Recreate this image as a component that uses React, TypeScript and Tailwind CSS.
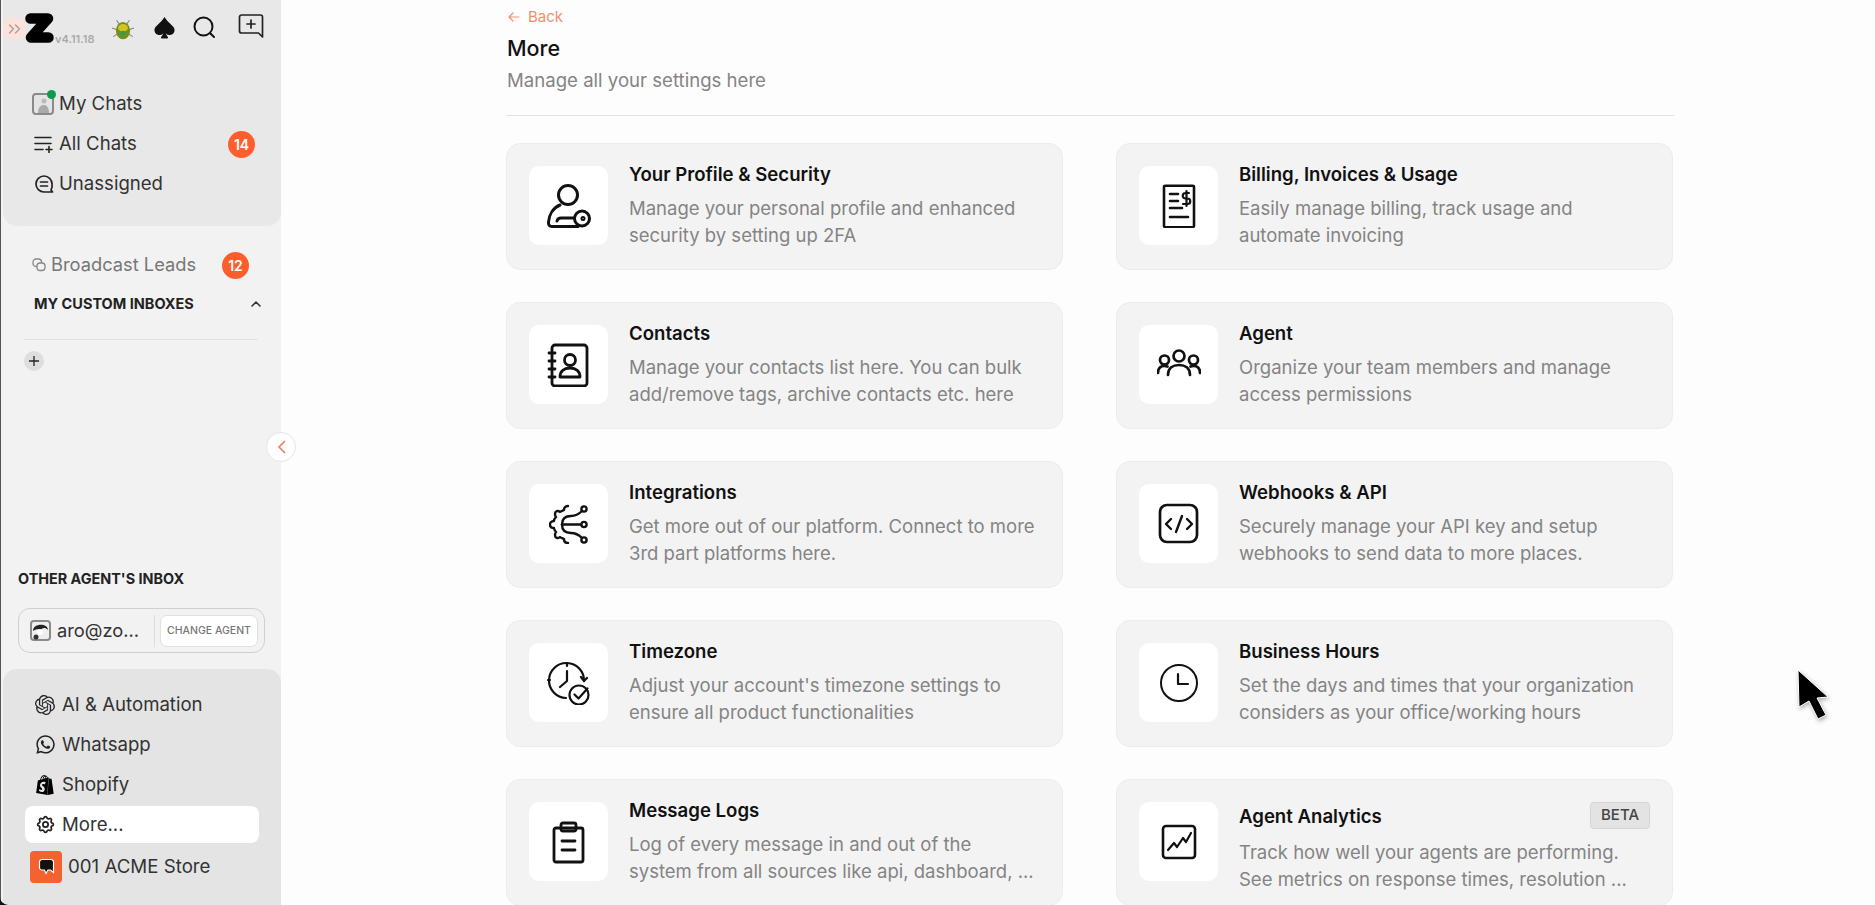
import type { ReactNode } from "react";
import { SiOpenai, SiShopify } from "react-icons/si";
import { FaWhatsapp } from "react-icons/fa";
import { BsSuitSpadeFill } from "react-icons/bs";
import { TbSettings } from "react-icons/tb";

function Stroke({ size, box, width = 2, children }: { size: number; box: number; width?: number; children: ReactNode }) {
  return (
    <svg width={size} height={size} viewBox={`0 0 ${box} ${box}`} fill="none" stroke="currentColor" strokeWidth={width} strokeLinecap="round" strokeLinejoin="round">
      {children}
    </svg>
  );
}

function ProfileKeyIcon() {
  return (
    <Stroke size={44} box={44} width={3}>
      <circle cx="21" cy="11" r="9.500" />
      <path d="M13 21C6 24 2 31 1.500 38C1.300 41 2.500 42.500 5 42.500H31" />
      <path d="M10 37C10.500 35 12 34 14 34H27" />
      <circle cx="35" cy="34.500" r="7.500" />
      <circle cx="36" cy="34.500" r="1" />
    </Stroke>
  );
}

function ContactsIcon() {
  return (
    <Stroke size={44} box={44} width={2.8}>
      <rect x="5" y="2" width="35" height="41" rx="3" />
      <circle cx="23" cy="17" r="5.500" />
      <path d="M13 34c0-6 4-9 10-9s10 3 10 9z" />
      <path d="M2 10h6M2 18h6M2 26h6M2 34h6" />
    </Stroke>
  );
}

function IntegrationsIcon() {
  return (
    <Stroke size={40} box={40} width={2.4}>
      <path d="M19 2C16 2 15 4 15 6C13 7 12 7 11 8C9 6 6 7 6 10C6 11 6 12 7 13C6 14 5 15 5 17C2 17 1 19 1 20.500C1 22 2 24 5 24C5 26 6 27 7 28C6 29 6 30 6 31C6 34 9 35 11 33C12 34 13 34 15 35C15 37 16 39 19 39" />
      <path d="M13 20.500C13 14 17 12 22 12C27 12 30 10 33 7" />
      <path d="M13 20.500C13 27 17 29 22 29C27 29 30 31 33 34" />
      <path d="M13 20.500H32" />
      <circle cx="35" cy="5" r="2.600" />
      <circle cx="35" cy="20.500" r="2.600" />
      <circle cx="35" cy="36" r="2.600" />
    </Stroke>
  );
}

function TimezoneIcon() {
  return (
    <Stroke size={44} box={44} width={2.2}>
      <path d="M37 20A17.500 17.500 0 1 0 19 37" />
      <path d="M20 2v3M3 19H1M34 16l3 4 3-3" />
      <path d="M20 10v10l-7 6" />
      <circle cx="32" cy="34" r="9.500" />
      <path d="M27.500 33.500l4 4 9-10" />
    </Stroke>
  );
}

function BillingIcon() {
  return (
    <Stroke size={44} box={44} width={2.6}>
      <rect x="7" y="2" width="30" height="47" rx="1.500" transform="scale(1 .88)" />
      <path d="M13 10h8M13 17h8M13 24h12M13 33h18" />
      <path d="M32 9h-3.500a2.500 2.500 0 0 0 0 5.500h2a2.500 2.500 0 0 1 0 5.500H26M29.500 7v15" strokeWidth="2.200" />
    </Stroke>
  );
}

function AgentIcon() {
  return (
    <Stroke size={44} box={44} width={2.7}>
      <circle cx="22" cy="13" r="5.500" />
      <circle cx="7.500" cy="17" r="4.500" />
      <circle cx="36.500" cy="17" r="4.500" />
      <path d="M11 32c0-7 5-10 11-10s11 3 11 10" />
      <path d="M1 30c0-5 3-7 6.500-7 1 0 2 .2 3 .6M43 30c0-5-3-7-6.500-7-1 0-2 .2-3 .6" />
    </Stroke>
  );
}

function WebhookIcon() {
  return (
    <Stroke size={44} box={44} width={2.7}>
      <rect x="3" y="3" width="37" height="37" rx="7" />
      <path d="M14 17l-5 5 5 5M30 17l5 5-5 5M25 14l-6 16" strokeWidth="2.400" />
    </Stroke>
  );
}

function ClockIcon() {
  return (
    <Stroke size={44} box={44} width={2}>
      <circle cx="22" cy="22" r="18" />
      <path d="M21 13v10h10" strokeWidth="2.200" />
    </Stroke>
  );
}

function LogsIcon() {
  return (
    <Stroke size={44} box={44} width={2.8}>
      <rect x="7" y="8" width="29" height="34" rx="2" />
      <rect x="14" y="3" width="15" height="8" rx="2" />
      <path d="M15 21h13M15 30h13" />
    </Stroke>
  );
}

function AnalyticsIcon() {
  return (
    <Stroke size={44} box={44} width={2.6}>
      <rect x="6" y="6" width="32" height="32" rx="3" />
      <path d="M11 30l6-7 3 4 6-9 3 4 5-9" strokeWidth="2.200" />
    </Stroke>
  );
}

const cards = [
  { title: "Your Profile & Security", desc: "Manage your personal profile and enhanced security by setting up 2FA", icon: <ProfileKeyIcon /> },
  { title: "Billing, Invoices & Usage", desc: "Easily manage billing, track usage and automate invoicing", icon: <BillingIcon /> },
  { title: "Contacts", desc: "Manage your contacts list here. You can bulk add/remove tags, archive contacts etc. here", icon: <ContactsIcon /> },
  { title: "Agent", desc: "Organize your team members and manage access permissions", icon: <AgentIcon /> },
  { title: "Integrations", desc: "Get more out of our platform. Connect to more 3rd part platforms here.", icon: <IntegrationsIcon /> },
  { title: "Webhooks & API", desc: "Securely manage your API key and setup webhooks to send data to more places.", icon: <WebhookIcon /> },
  { title: "Timezone", desc: "Adjust your account's timezone settings to ensure all product functionalities", icon: <TimezoneIcon /> },
  { title: "Business Hours", desc: "Set the days and times that your organization considers as your office/working hours", icon: <ClockIcon /> },
  { title: "Message Logs", desc: "Log of every message in and out of the\nsystem from all sources like api, dashboard, ...", icon: <LogsIcon /> },
  { title: "Agent Analytics", desc: "Track how well your agents are performing. See metrics on response times, resolution ...", icon: <AnalyticsIcon />, beta: true },
];

function SettingCard({ title, desc, icon, beta }: { title: string; desc: string; icon: ReactNode; beta?: boolean }) {
  return (
    <div className="flex h-[127px] gap-[21px] rounded-[14px] border border-[#ececec] bg-[#f3f3f3] p-[22px]">
      <div className="flex h-[79px] w-[79px] shrink-0 items-center justify-center rounded-[10px] bg-white text-[#111]">
        {icon}
      </div>
      <div className="min-w-0 flex-1">
        <div className={`flex items-center justify-between ${beta ? "mb-[10px]" : "-mt-[2px] mb-[11px]"}`}>
          <h3 className="text-[18.600px] leading-[20px] font-semibold text-[#111]">{title}</h3>
          {beta && (
            <span className="flex h-[27px] w-[60px] items-center justify-center rounded-[4px] border border-[#d5d5d5] bg-[#e3e3e3] text-[15px] font-medium text-[#444]">
              BETA
            </span>
          )}
        </div>
        <p className="text-[18.500px] leading-[26.600px] whitespace-pre-line text-[#848484]">{desc}</p>
      </div>
    </div>
  );
}

function Badge({ n }: { n: number }) {
  return (
    <span className="flex h-[27px] w-[27px] items-center justify-center rounded-full bg-[#fc5f2d] text-[14px] font-semibold text-white">
      {n}
    </span>
  );
}

function NavRow({ icon, label, badge }: { icon: ReactNode; label: string; badge?: number }) {
  return (
    <div className="flex h-[40px] items-center pr-[26px] pl-[32px]">
      <span className="flex w-[24px] shrink-0 items-center text-[#222]">{icon}</span>
      <span className="flex-1 text-[18.600px] text-[#333]">{label}</span>
      {badge !== undefined && <Badge n={badge} />}
    </div>
  );
}

function BottomRow({ icon, label, active }: { icon: ReactNode; label: string; active?: boolean }) {
  return (
    <div className={`flex h-[37px] items-center rounded-[8px] pl-[10px] ${active ? "bg-white" : ""}`}>
      <span className="flex w-[27px] shrink-0 items-center text-[#222]">{icon}</span>
      <span className="text-[18.600px] text-[#333]">{label}</span>
    </div>
  );
}

function Sidebar() {
  return (
    <aside className="flex h-full w-[281px] shrink-0 flex-col border-l border-[#555] bg-[#f2f2f2]">
      <div className="ml-[2px] h-[226px] rounded-b-[14px] bg-[#e8e8e8]">
        <div className="flex h-[46px] items-start pt-[13px]">
          <div className="mt-[5px] flex h-[21px] w-[22px] shrink-0 items-center justify-center rounded-[5px] bg-[#fbe2da] text-[#a99]">
            <svg width="13" height="10" viewBox="0 0 13 10" fill="none" stroke="currentColor" strokeWidth="1.200" strokeLinecap="round" strokeLinejoin="round">
              <path d="M1.500 1l4 4-4 4M7.500 1l4 4-4 4" />
            </svg>
          </div>
          <svg width="29" height="30" viewBox="0 0 29 30" className="shrink-0">
            <path d="M5.500 5.500H23L6 24.500H23.500" fill="none" stroke="#000" strokeWidth="10.500" strokeLinejoin="round" strokeLinecap="round" />
          </svg>
          <span className="mt-[20px] ml-[1px] text-[11px] leading-[12px] font-semibold text-[#aaa]">v4.11.18</span>
          <svg width="24" height="24" viewBox="0 0 22 22" className="mt-[4px] ml-[17px] shrink-0">
            <path d="M5 3L8 7M17 3l-3 4M1 10l5 2M21 10l-5 2M2 18l5-3M20 18l-5-3" stroke="#8a8a6a" strokeWidth="1" />
            <ellipse cx="11" cy="12.500" rx="6.500" ry="8" fill="#6f8f1e" />
            <ellipse cx="11" cy="10" rx="4.500" ry="3.500" fill="#d5c21b" />
            <circle cx="11" cy="14.500" r="2" fill="#2f9a6a" />
          </svg>
          <span className="mt-[4px] ml-[18px] shrink-0 text-[#111]">
            <BsSuitSpadeFill size={23} />
          </span>
          <svg width="23" height="23" viewBox="0 0 23 23" fill="none" stroke="#111" strokeWidth="2" strokeLinecap="round" className="mt-[3px] ml-[17px] shrink-0">
            <circle cx="10.500" cy="10.500" r="9" />
            <path d="M17.500 17.500L21 21" />
          </svg>
          <svg width="26" height="25" viewBox="0 0 26 25" fill="none" stroke="#222" strokeWidth="1.700" strokeLinecap="round" strokeLinejoin="round" className="mt-[1px] ml-[22px] shrink-0">
            <path d="M3.500 1h19a2 2 0 0 1 2 2v20l-4-4H3.500a2 2 0 0 1-2-2V3a2 2 0 0 1 2-2z" />
            <path d="M13 6v8M9 10h8" />
          </svg>
        </div>
        <div className="mt-[38px]">
          <NavRow
            label="My Chats"
            icon={
              <span className="relative -ml-[3px] block h-[22px] w-[22px] rounded-[4px] border-2 border-[#8a8a8a] bg-[#e4e4e4]">
                <svg width="18" height="18" viewBox="0 0 18 18" className="block">
                  <circle cx="10" cy="6" r="2.500" fill="#bbb" />
                  <path d="M4 18c0-6 3-8 6-8s5 3 5 8z" fill="#aaa" />
                </svg>
                <span className="absolute -top-[5px] -right-[4px] h-[9px] w-[9px] rounded-full bg-[#0e9b4f]" />
              </span>
            }
          />
          <NavRow
            label="All Chats"
            badge={14}
            icon={
              <svg width="19" height="18" viewBox="0 0 19 18" fill="none" stroke="#222" strokeWidth="1.600" strokeLinecap="round" className="-ml-[1px]">
                <path d="M1 2.500h16M1 8.500h16M1 14.500h8M15 11.500v6M12 14.500h6" />
              </svg>
            }
          />
          <NavRow
            label="Unassigned"
            icon={
              <svg width="20" height="20" viewBox="0 0 20 20" fill="none" stroke="#222" strokeWidth="1.700" strokeLinecap="round" strokeLinejoin="round" className="-ml-[1px]">
                <path d="M18 10a8 8 0 1 0-8 8h8.500l-1.500-2a8 8 0 0 0 1-6z" />
                <path d="M6.500 8h7M6.500 12h7" />
              </svg>
            }
          />
        </div>
      </div>

      <div className="flex h-[40px] items-center pt-[38px] pr-[32px] pl-[31px]">
        <svg width="14" height="14" viewBox="0 0 14 14" fill="none" stroke="#888" strokeWidth="1.300" className="mr-[5px] shrink-0">
          <rect x="1" y="1" width="8.500" height="7.500" rx="3" />
          <rect x="5" y="5" width="8" height="7.500" rx="3" fill="#f2f2f2" />
        </svg>
        <span className="flex-1 text-[18.300px] text-[#777]">Broadcast Leads</span>
        <Badge n={12} />
      </div>
      <div className="mt-[29px] flex items-center justify-between pr-[19px] pl-[33px]">
        <span className="text-[14.500px] leading-[18px] font-bold text-[#222]">MY CUSTOM INBOXES</span>
        <svg width="12" height="8" viewBox="0 0 12 8" fill="none" stroke="#333" strokeWidth="1.600" strokeLinecap="round" strokeLinejoin="round">
          <path d="M2 6l4-4 4 4" />
        </svg>
      </div>
      <div className="mx-[23px] mt-[26px] border-t border-[#e2e2e2]" />
      <div className="mt-[11px] ml-[23px] flex h-[20px] w-[20px] items-center justify-center rounded-full bg-[#dedede] text-[#222]">
        <svg width="10" height="10" viewBox="0 0 10 10" stroke="currentColor" strokeWidth="1.300">
          <path d="M5 0v10M0 5h10" />
        </svg>
      </div>

      <div className="mt-auto px-[17px]">
        <div className="text-[14.400px] leading-[18px] font-bold text-[#222]">OTHER AGENT'S INBOX</div>
        <div className="mt-[20px] flex h-[45px] w-[247px] items-center rounded-[12px] border border-[#cfcfcf] pr-[6px] pl-[11px]">
          <svg width="21" height="21" viewBox="0 0 21 21" className="shrink-0">
            <rect width="21" height="21" rx="4" fill="#8a8a8a" />
            <rect x="2" y="2" width="17" height="17" rx="2" fill="#eee" />
            <path d="M3 11c0-8 15-8 15-1-3-3-6-2-7 0-3-1-5-1-8 1z" fill="#222" />
            <circle cx="10" cy="12" r="3" fill="#fff" />
            <circle cx="6" cy="17" r="2.500" fill="#333" />
          </svg>
          <span className="ml-[6px] w-[97px] shrink-0 text-[18.300px] text-[#333]">aro@zo...</span>
          <span className="h-[32px] border-l border-[#ddd]" />
          <span className="ml-[5px] flex h-[32px] flex-1 items-center justify-center rounded-[7px] border border-[#e0e0e0] bg-white text-[10.500px] font-medium text-[#777]">
            CHANGE AGENT
          </span>
        </div>
      </div>
      <div className="mt-[16px] ml-[2px] h-[236px] rounded-t-[14px] bg-[#e4e4e4] px-[22px] pt-[17px]">
        <BottomRow icon={<SiOpenai size={20} />} label="AI & Automation" />
        <div className="mt-[3px]">
          <BottomRow icon={<FaWhatsapp size={21} />} label="Whatsapp" />
        </div>
        <div className="mt-[3px]">
          <BottomRow icon={<SiShopify size={20} className="text-black" />} label="Shopify" />
        </div>
        <div className="mt-[3px]">
          <BottomRow icon={<TbSettings size={21} />} label="More..." active />
        </div>
        <div className="mt-[8px] ml-[5px] flex items-center">
          <span className="flex h-[32px] w-[32px] shrink-0 items-center justify-center rounded-[4px] bg-[#f4622f]">
            <svg width="17" height="18" viewBox="0 0 17 18">
              <path d="M4 1.500h9a2.500 2.500 0 0 1 2.500 2.500v10.500l-3-2.500h-2.500l-2 3.500-1.500-3.500H4A2.500 2.500 0 0 1 1.500 10V4A2.500 2.500 0 0 1 4 1.500z" fill="#111" stroke="#fff" strokeWidth="1.200" />
            </svg>
          </span>
          <span className="ml-[6px] text-[18.700px] text-[#333]">001 ACME Store</span>
        </div>
      </div>
    </aside>
  );
}

export default function App() {
  return (
    <div className="relative flex h-[905px] w-full overflow-hidden bg-[#fdfdfd] font-[family-name:Inter,sans-serif]">
      <Sidebar />

      <button className="absolute top-[432px] left-[266px] flex h-[30px] w-[30px] items-center justify-center rounded-full border border-[#e6e6e6] bg-white text-[#e8805f]">
        <svg width="9" height="14" viewBox="0 0 9 14" fill="none" stroke="currentColor" strokeWidth="1.700" strokeLinecap="round" strokeLinejoin="round">
          <path d="M7.500 1.500L2 7l5.500 5.500" />
        </svg>
      </button>

      <main className="flex-1 pl-[225px]">
        <div className="w-[1168px]">
          <div className="flex h-[34px] items-center pl-[2px] text-[#ef8f70]">
            <svg width="12" height="10" viewBox="0 0 12 10" fill="none" stroke="currentColor" strokeWidth="1.200" strokeLinecap="round" strokeLinejoin="round">
              <path d="M11 5H1M5 1L1 5l4 4" />
            </svg>
            <span className="ml-[8px] text-[15px]">Back</span>
          </div>
          <h1 className="pl-[1px] text-[21.500px] leading-[28px] font-medium text-[#111]">More</h1>
          <p className="mt-[6px] pl-[1px] text-[18.600px] leading-[24px] text-[#848484]">Manage all your settings here</p>
          <div className="mt-[23px] border-t border-[#e2e2e2]" />
          <div className="mt-[27px] grid grid-cols-[557px_557px] gap-x-[53px] gap-y-[32px]">
            {cards.map((c) => (
              <SettingCard key={c.title} {...c} />
            ))}
          </div>
        </div>
      </main>

      <svg width="36" height="56" viewBox="0 0 36 56" className="absolute top-[668px] left-[1796px] drop-shadow-[1px_2px_2px_rgba(0,0,0,0.3)]">
        <path d="M2 2L3 39L13 33L22 51L30 47L21 30L32 29Z" fill="#000" stroke="#fff" strokeWidth="1" strokeLinejoin="round" />
      </svg>

      <svg width="8" height="8" viewBox="0 0 8 8" className="absolute bottom-0 left-0">
        <path d="M0 0C0 4 3 7 8 8H0Z" fill="#111" />
      </svg>
    </div>
  );
}
